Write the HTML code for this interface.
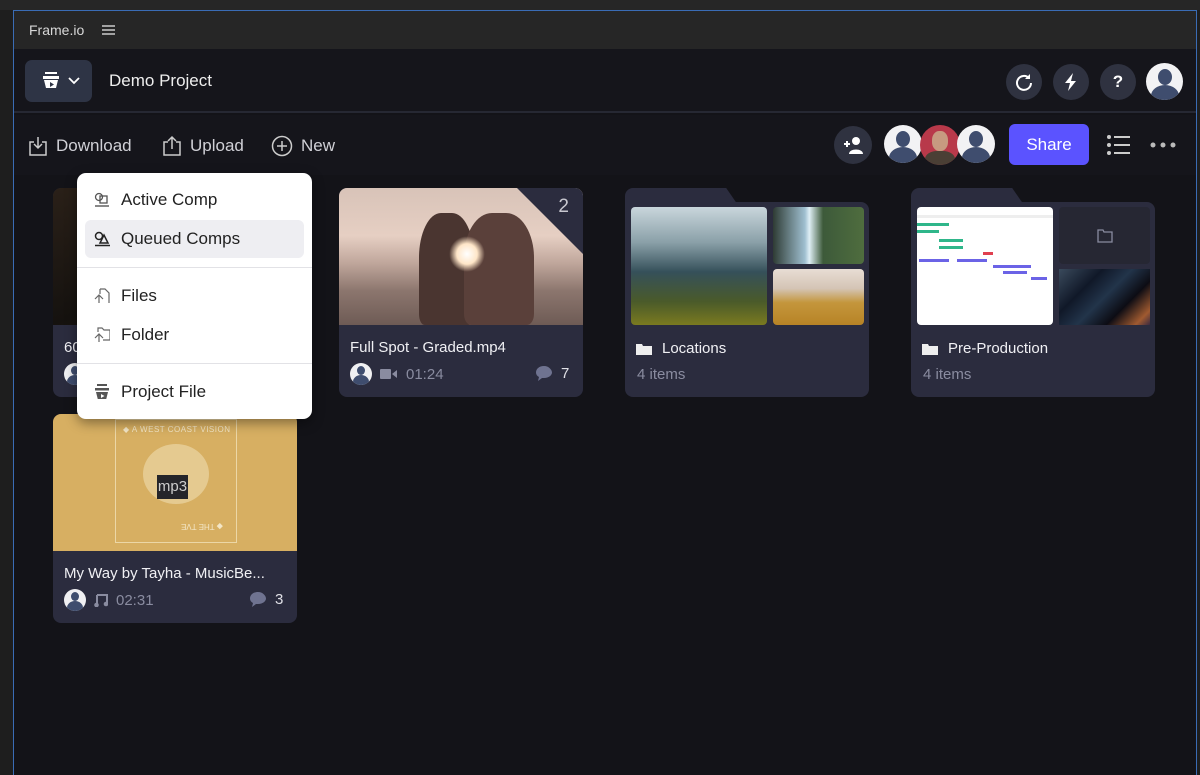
<!DOCTYPE html>
<html><head><meta charset="utf-8">
<style>
*{box-sizing:border-box;margin:0;padding:0}
body{width:1200px;height:775px;background:#1e1e1e;font-family:"Liberation Sans",sans-serif;position:relative;overflow:hidden;color:#e6e6ea}
.abs{position:absolute}
.strip{left:0;top:0;width:1200px;height:10px;background:#262626}
.panel{left:13px;top:10px;width:1184px;height:765px;border:1px solid #3a6cb5;border-bottom:none;background:#131318}
.phead{left:0;top:0;width:1182px;height:38px;background:#262626;font-size:14px;color:#d8d8d8}
.hdr{left:0;top:38px;width:1182px;height:64px;background:#15151b;border-bottom:2px solid #262833}
.tb{left:0;top:104px;width:1182px;height:60px;background:#15151b}
.circ{width:36px;height:36px;border-radius:50%;background:#2f3240;display:flex;align-items:center;justify-content:center;color:#fff}
.av{width:38px;height:38px;border-radius:50%;background:#f2f2f4;overflow:hidden;position:absolute}
.av:before{content:"";position:absolute;left:12px;top:6px;width:14px;height:16px;border-radius:50%;background:#3f4d6e}
.av:after{content:"";position:absolute;left:5px;top:22px;width:28px;height:22px;border-radius:50%;background:#3f4d6e}
.tbi{font-size:17px;color:#d0d0d6;display:flex;align-items:center;gap:8px;position:absolute;top:20px}
.card{background:#2b2c3e;border-radius:8px;overflow:hidden;position:absolute;width:244px;height:209px}
.card .t{height:137px}
.ttl{position:absolute;left:11px;font-size:15px;color:#f0f0f4}
.meta{position:absolute;left:11px;font-size:15px;color:#8a8ca0;display:flex;align-items:center;gap:8px}
.sav{width:22px;height:22px;border-radius:50%;background:#f0f0f2;position:relative;overflow:hidden}
.sav:before{content:"";position:absolute;left:7px;top:3px;width:8px;height:9px;border-radius:50%;background:#3f4d6e}
.sav:after{content:"";position:absolute;left:3px;top:12px;width:16px;height:14px;border-radius:50%;background:#3f4d6e}
.menu{left:77px;top:173px;width:235px;height:246px;background:#fff;border-radius:9px;color:#222;font-size:17px;box-shadow:0 4px 12px rgba(0,0,0,.4)}
.mi{position:absolute;left:44px}
.mic{position:absolute;left:17px;width:16px;height:16px}
.sep{position:absolute;left:0;width:235px;height:1px;background:#e2e2e6}
</style></head><body>
<div class="abs strip"></div>
<div class="abs panel">
 <div class="abs phead"><span class="abs" style="left:15px;top:11px">Frame.io</span>
  <svg class="abs" style="left:88px;top:13px" width="13" height="12"><path d="M0 2h13M0 6h13M0 10h13" stroke="#ccc" stroke-width="1.4"/></svg></div>
 <div class="abs hdr">
  <div class="abs" style="left:11px;top:11px;width:67px;height:42px;background:#2e3445;border-radius:7px"></div>
  <svg class="abs" style="left:28px;top:22px" width="20" height="20"><rect x="3" y="1" width="12" height="2" fill="#fff"/><rect x="1" y="5" width="16" height="3" fill="#fff"/><path d="M2 9h14l-2 8H4z" fill="#fff"/><path d="M8 11l4 2.5-4 2.5z" fill="#2e3445"/></svg>
  <svg class="abs" style="left:54px;top:28px" width="12" height="8"><path d="M1 1l5 5 5-5" stroke="#fff" stroke-width="1.8" fill="none"/></svg>
  <span class="abs" style="left:95px;top:22px;font-size:17px;color:#eee">Demo Project</span>
  <div class="abs circ" style="left:992px;top:15px"><svg width="20" height="20"><path d="M15 6A7 7 0 1 0 17 11" stroke="#fff" stroke-width="2" fill="none"/><path d="M16 2v5h-5" fill="#fff"/></svg></div>
  <div class="abs circ" style="left:1039px;top:15px"><svg width="16" height="20"><path d="M10 1L2 11h5l-2 8 8-10H8z" fill="#fff"/></svg></div>
  <div class="abs circ" style="left:1086px;top:15px;font-weight:bold;font-size:17px">?</div>
  <div class="av" style="left:1132px;top:14px;width:37px;height:37px"></div>
 </div>
 <div class="abs tb">
  <div class="tbi" style="left:14px"><svg width="20" height="22"><path d="M6 7H2v13h16V7h-4" stroke="#ccc" stroke-width="1.5" fill="none"/><path d="M10 2v11M6 9l4 4 4-4" stroke="#ccc" stroke-width="1.5" fill="none"/></svg>Download</div>
  <div class="tbi" style="left:148px"><svg width="20" height="22"><path d="M6 7H2v13h16V7h-4" stroke="#ccc" stroke-width="1.5" fill="none"/><path d="M10 14V2M6 6l4-4 4 4" stroke="#ccc" stroke-width="1.5" fill="none"/></svg>Upload</div>
  <div class="tbi" style="left:257px"><svg width="22" height="22"><circle cx="11" cy="11" r="9.5" stroke="#ccc" stroke-width="1.5" fill="none"/><path d="M11 6v10M6 11h10" stroke="#ccc" stroke-width="1.5"/></svg>New</div>
  <div class="abs circ" style="left:820px;top:11px;width:38px;height:38px"><svg width="24" height="20"><path d="M3 9h6M6 6v6" stroke="#fff" stroke-width="2"/><circle cx="15" cy="6" r="4" fill="#fff"/><path d="M8 19c0-6 14-6 14 0z" fill="#fff"/></svg></div>
  <div class="av" style="left:870px;top:10px"></div>
  <div class="abs" style="left:906px;top:10px;width:40px;height:40px;border-radius:50%;background:#b8394a;overflow:hidden"><div style="position:absolute;left:12px;top:6px;width:16px;height:20px;border-radius:45%;background:#c79a80"></div><div style="position:absolute;left:5px;top:26px;width:30px;height:20px;border-radius:40%;background:#4a3f35"></div></div>
  <div class="av" style="left:943px;top:10px"></div>
  <div class="abs" style="left:995px;top:9px;width:80px;height:41px;background:#5b53ff;border-radius:6px;color:#fff;font-size:17px;display:flex;align-items:center;justify-content:center">Share</div>
  <svg class="abs" style="left:1092px;top:19px" width="24" height="22"><g fill="#ccc"><circle cx="3" cy="3" r="2"/><circle cx="3" cy="11" r="2"/><circle cx="3" cy="19" r="2"/><rect x="8" y="2" width="16" height="2"/><rect x="8" y="10" width="16" height="2"/><rect x="8" y="18" width="16" height="2"/></g></svg>
  <svg class="abs" style="left:1136px;top:27px" width="28" height="6"><g fill="#bbb"><circle cx="3" cy="3" r="2.5"/><circle cx="13" cy="3" r="2.5"/><circle cx="23" cy="3" r="2.5"/></g></svg>
 </div>
</div>

<!-- card 1 (partially hidden) -->
<div class="card" style="left:53px;top:188px"><div class="t" style="background:linear-gradient(160deg,#2a2018,#15120f 60%,#2a2118)"></div>
 <div class="ttl" style="top:151px">60</div><div class="meta" style="top:175px"><div class="sav"></div></div></div>
<!-- card 2 -->
<div class="card" style="left:339px;top:188px">
 <div class="t" style="position:relative;background:linear-gradient(180deg,#d8c3b8 0%,#e6cfc3 35%,#bfa69b 55%,#8c766e 75%,#6e5b55 100%)">
  <div style="position:absolute;left:80px;top:25px;width:55px;height:112px;background:#4a3530;border-radius:40% 40% 10% 10%"></div>
  <div style="position:absolute;left:125px;top:25px;width:70px;height:112px;background:#5a403a;border-radius:40% 40% 10% 10%"></div>
  <div style="position:absolute;left:110px;top:48px;width:36px;height:36px;border-radius:50%;background:radial-gradient(#fff,#ffe6c8 40%,rgba(255,220,190,0) 70%)"></div>
  <div style="position:absolute;right:0;top:0;width:0;height:0;border-top:66px solid #2b2c3e;border-left:66px solid transparent"></div>
  <span style="position:absolute;right:14px;top:8px;font-size:19px;color:#c8c8d0">2</span>
 </div>
 <div class="ttl" style="top:151px">Full Spot - Graded.mp4</div>
 <div class="meta" style="top:175px"><div class="sav"></div><svg width="18" height="12"><rect x="0" y="1" width="11" height="10" rx="1" fill="#8a8ca0"/><path d="M12 6l5-4v8z" fill="#8a8ca0"/></svg>01:24</div>
 <div class="meta" style="top:177px;left:196px;color:#e0e0e6"><svg width="18" height="17"><path d="M9 1C4 1 1 4 1 7.5c0 2 1 3.5 3 4.5l-1 4 4-3h2c5 0 8-3 8-5.5S14 1 9 1z" fill="#6f7390"/></svg>7</div>
</div>
<!-- folder 3 -->
<div class="abs" style="left:625px;top:188px;width:115px;height:20px;background:#2b2c3e;border-radius:8px 8px 0 0;clip-path:polygon(0 0,88% 0,100% 100%,0 100%)"></div>
<div class="card" style="left:625px;top:202px;height:195px;border-radius:0 8px 8px 8px">
 <div style="position:absolute;left:6px;top:5px;width:136px;height:118px;border-radius:4px;background:linear-gradient(180deg,#c9d6dc 0%,#8aa0a8 30%,#35505a 55%,#4a5a2a 80%,#7a7a20 100%)"></div>
 <div style="position:absolute;left:148px;top:5px;width:91px;height:57px;border-radius:4px;background:linear-gradient(90deg,#2e3b34,#9fbfd0 35%,#dfeff5 40%,#3d5a3a 55%,#4f6d3e)"></div>
 <div style="position:absolute;left:148px;top:67px;width:91px;height:56px;border-radius:4px;background:linear-gradient(180deg,#e8ddd4 0%,#d4c4b5 35%,#c4963c 60%,#b78326 100%)"></div>
 <svg style="position:absolute;left:11px;top:140px" width="16" height="13"><path d="M0 2h6l1 2h9v9H0z" fill="#eee"/></svg>
 <div class="ttl" style="top:138px;left:37px">Locations</div>
 <div class="meta" style="top:164px;left:12px">4 items</div>
</div>
<!-- folder 4 -->
<div class="abs" style="left:911px;top:188px;width:115px;height:20px;background:#2b2c3e;border-radius:8px 8px 0 0;clip-path:polygon(0 0,88% 0,100% 100%,0 100%)"></div>
<div class="card" style="left:911px;top:202px;height:195px;border-radius:0 8px 8px 8px">
 <div style="position:absolute;left:6px;top:5px;width:136px;height:118px;border-radius:4px;background:#fff;overflow:hidden">
  <div style="position:absolute;left:0;top:8px;width:136px;height:3px;background:#eee"></div>
  <div style="position:absolute;left:0;top:16px;width:32px;height:3px;background:#2fb68a"></div>
  <div style="position:absolute;left:0;top:23px;width:22px;height:3px;background:#2fb68a"></div>
  <div style="position:absolute;left:22px;top:32px;width:24px;height:3px;background:#2fb68a"></div>
  <div style="position:absolute;left:22px;top:39px;width:24px;height:3px;background:#2fb68a"></div>
  <div style="position:absolute;left:66px;top:45px;width:10px;height:3px;background:#e04050"></div>
  <div style="position:absolute;left:2px;top:52px;width:30px;height:3px;background:#6b63e6"></div>
  <div style="position:absolute;left:40px;top:52px;width:30px;height:3px;background:#6b63e6"></div>
  <div style="position:absolute;left:76px;top:58px;width:38px;height:3px;background:#6b63e6"></div>
  <div style="position:absolute;left:86px;top:64px;width:24px;height:3px;background:#6b63e6"></div>
  <div style="position:absolute;left:114px;top:70px;width:16px;height:3px;background:#6b63e6"></div>
 </div>
 <div style="position:absolute;left:148px;top:5px;width:91px;height:57px;border-radius:4px;background:#262733;display:flex;align-items:center;justify-content:center"><svg width="16" height="14"><path d="M1 1h5l1 2h8v10H1z" stroke="#8a8ca0" stroke-width="1.3" fill="none"/></svg></div>
 <div style="position:absolute;left:148px;top:67px;width:91px;height:56px;background:linear-gradient(135deg,#3a4a5c,#101828 30%,#22344a 50%,#0c0c14 70%,#a05a30 90%,#3a2a40)"></div>
 <svg style="position:absolute;left:11px;top:140px" width="16" height="13"><path d="M0 2h6l1 2h9v9H0z" fill="#eee"/></svg>
 <div class="ttl" style="top:138px;left:37px">Pre-Production</div>
 <div class="meta" style="top:164px;left:12px">4 items</div>
</div>
<!-- card 5 -->
<div class="card" style="left:53px;top:414px">
 <div class="t" style="position:relative;background:#d7af62">
  <div style="position:absolute;left:62px;top:5px;width:122px;height:124px;border:1px solid #ecd7a6"></div>
  <span style="position:absolute;left:70px;top:11px;font-size:8px;color:#f3e6c6;letter-spacing:.5px">◆ A WEST COAST VISION</span>
  <span style="position:absolute;left:128px;top:108px;font-size:8px;color:#f3e6c6;transform:rotate(180deg)">◆ THE TVE</span>
  <div style="position:absolute;left:90px;top:30px;width:66px;height:60px;border-radius:50%;background:#ead3a0;opacity:.75"></div>
  <div style="position:absolute;left:104px;top:61px;width:31px;height:24px;background:#25252a;color:#ccc;font-size:15px;text-align:center;line-height:24px">mp3</div>
 </div>
 <div class="ttl" style="top:151px">My Way by Tayha - MusicBe...</div>
 <div class="meta" style="top:175px"><div class="sav"></div><svg width="14" height="14"><path d="M3 2h10v9M3 2v10" stroke="#8a8ca0" stroke-width="2" fill="none"/><circle cx="2.5" cy="12" r="2.3" fill="#8a8ca0"/><circle cx="12" cy="11" r="2.3" fill="#8a8ca0"/></svg>02:31</div>
 <div class="meta" style="top:177px;left:196px;color:#e0e0e6"><svg width="18" height="17"><path d="M9 1C4 1 1 4 1 7.5c0 2 1 3.5 3 4.5l-1 4 4-3h2c5 0 8-3 8-5.5S14 1 9 1z" fill="#6f7390"/></svg>3</div>
</div>

<!-- menu -->
<div class="abs menu">
 <div style="position:absolute;left:8px;top:47px;width:219px;height:38px;background:#eeeef2;border-radius:6px"></div>
 <svg class="mic" style="top:19px" width="16" height="16"><circle cx="5" cy="5" r="3.5" stroke="#555" stroke-width="1.3" fill="none"/><rect x="6" y="4" width="7" height="7" stroke="#555" stroke-width="1.3" fill="none"/><path d="M1 14h14" stroke="#555" stroke-width="1.4"/></svg>
 <span class="mi" style="top:17px">Active Comp</span>
 <svg class="mic" style="top:58px" width="16" height="16"><circle cx="5" cy="5" r="3.5" stroke="#222" stroke-width="1.5" fill="none"/><path d="M6 12L10 4l4 8z" stroke="#222" stroke-width="1.5" fill="none"/><path d="M1 14.5h15" stroke="#222" stroke-width="1.5"/></svg>
 <span class="mi" style="top:56px">Queued Comps</span>
 <div class="sep" style="top:94px"></div>
 <svg class="mic" style="top:114px" width="16" height="18"><path d="M6 2h5l4 4v11H8M6 2v5" stroke="#666" stroke-width="1.2" fill="none"/><path d="M5 17V9M1 12l4-4 4 4" stroke="#666" stroke-width="1.2" fill="none"/></svg>
 <span class="mi" style="top:113px">Files</span>
 <svg class="mic" style="top:153px" width="17" height="18"><path d="M4 6V2h4l2 2h6v10H9" stroke="#666" stroke-width="1.2" fill="none"/><path d="M5 17V8M1 12l4-4 4 4" stroke="#666" stroke-width="1.2" fill="none"/></svg>
 <span class="mi" style="top:152px">Folder</span>
 <div class="sep" style="top:190px"></div>
 <svg class="mic" style="top:210px" width="16" height="18"><rect x="3" y="1" width="10" height="2" fill="#555"/><rect x="1" y="5" width="14" height="2.5" fill="#555"/><path d="M2 9h12l-2 8H4z" fill="#555"/><path d="M7 11l3.5 2-3.5 2z" fill="#fff"/></svg>
 <span class="mi" style="top:209px">Project File</span>
</div>
</body></html>
